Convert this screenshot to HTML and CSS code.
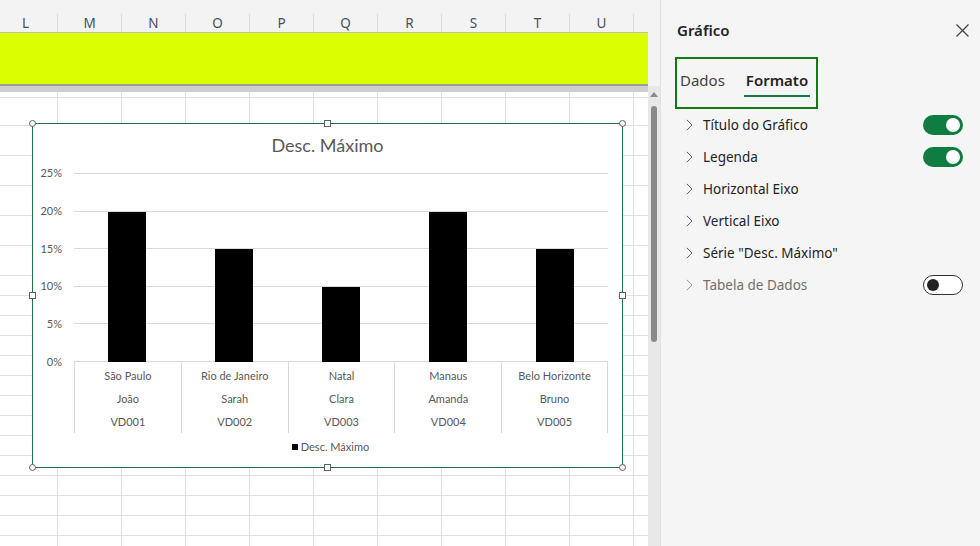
FILE: index.html
```html
<!DOCTYPE html>
<html lang="pt">
<head>
<meta charset="utf-8">
<title>Gráfico</title>
<link rel="stylesheet" href="styles.css">
</head>
<body>
<div class="app">
  <div class="sheet">
    <div class="sheet-main">
      <div class="col-head">
        <div class="col">L</div>
        <div class="col">M</div>
        <div class="col">N</div>
        <div class="col">O</div>
        <div class="col">P</div>
        <div class="col">Q</div>
        <div class="col">R</div>
        <div class="col">S</div>
        <div class="col">T</div>
        <div class="col">U</div>
        <div class="col"></div>
      </div>
      <div class="band"></div>
      <div class="freeze-dark"></div>
      <div class="freeze-light"></div>
      <div class="grid">
        <div class="row h5"></div>
        <div class="row h27"></div>
        <div class="row h29"></div>
        <div class="row h29"></div>
        <div class="row h29"></div>
        <div class="row h29"></div>
        <div class="row h29"></div>
        <div class="row h19"></div>
        <div class="row h19"></div>
        <div class="row h19"></div>
        <div class="row h19"></div>
        <div class="row h19"></div>
        <div class="row h19"></div>
        <div class="row h19"></div>
        <div class="row h19"></div>
        <div class="row h19"></div>
        <div class="row h19"></div>
        <div class="row h19"></div>
        <div class="row h19"></div>
        <div class="row h19"></div>
        <div class="row h19"></div>
      </div>

      <div class="chart">
        <span class="hd circ tl"></span>
        <span class="hd sq tm"></span>
        <span class="hd circ tr"></span>
        <span class="hd sq ml"></span>
        <span class="hd sq mr"></span>
        <span class="hd circ bl"></span>
        <span class="hd sq bm"></span>
        <span class="hd circ br"></span>

        <div class="chart-title">Desc. Máximo</div>
        <div class="chart-body">
          <div class="yaxis">
            <span>25%</span><span>20%</span><span>15%</span><span>10%</span><span>5%</span><span>0%</span>
          </div>
          <div class="plot">
            <div class="gridlines">
              <i></i><i></i><i></i><i></i><i></i><i></i>
            </div>
            <div class="bars">
              <div class="bar" style="height:150px"></div>
              <div class="bar" style="height:113px"></div>
              <div class="bar" style="height:75px"></div>
              <div class="bar" style="height:150px"></div>
              <div class="bar" style="height:113px"></div>
            </div>
          </div>
          <div class="cats">
            <div class="cat"><div>São Paulo</div><div>João</div><div>VD001</div></div>
            <div class="cat"><div>Rio de Janeiro</div><div>Sarah</div><div>VD002</div></div>
            <div class="cat"><div>Natal</div><div>Clara</div><div>VD003</div></div>
            <div class="cat"><div>Manaus</div><div>Amanda</div><div>VD004</div></div>
            <div class="cat last"><div>Belo Horizonte</div><div>Bruno</div><div>VD005</div></div>
          </div>
        </div>
        <div class="legend"><span class="mark"></span><span>Desc. Máximo</span></div>
      </div>
    </div>
    <div class="vscroll">
      <div class="vs-top"></div>
      <div class="vs-track">
        <div class="vs-arrow"></div>
        <div class="vs-thumb"></div>
      </div>
    </div>
  </div>

  <aside class="panel">
    <div class="panel-head">
      <div class="panel-title">Gráfico</div>
      <svg class="close" width="13" height="13" viewBox="0 0 13 13"><path d="M0.5 0.5 L12.5 12.5 M12.5 0.5 L0.5 12.5" stroke="#424242" stroke-width="1.2" fill="none"/></svg>
    </div>
    <div class="tabs">
      <div class="tab">Dados</div>
      <div class="tab active">Formato</div>
    </div>
    <div class="opts">
      <div class="opt">
        <svg class="chev" width="7" height="12" viewBox="0 0 7 12"><path d="M0.8 0.8 L6 6 L0.8 11.2" stroke="#616161" stroke-width="1" fill="none"/></svg>
        <span class="opt-label">Título do Gráfico</span>
        <span class="tg on"><span class="knob"></span></span>
      </div>
      <div class="opt">
        <svg class="chev" width="7" height="12" viewBox="0 0 7 12"><path d="M0.8 0.8 L6 6 L0.8 11.2" stroke="#616161" stroke-width="1" fill="none"/></svg>
        <span class="opt-label">Legenda</span>
        <span class="tg on"><span class="knob"></span></span>
      </div>
      <div class="opt">
        <svg class="chev" width="7" height="12" viewBox="0 0 7 12"><path d="M0.8 0.8 L6 6 L0.8 11.2" stroke="#616161" stroke-width="1" fill="none"/></svg>
        <span class="opt-label">Horizontal Eixo</span>
      </div>
      <div class="opt">
        <svg class="chev" width="7" height="12" viewBox="0 0 7 12"><path d="M0.8 0.8 L6 6 L0.8 11.2" stroke="#616161" stroke-width="1" fill="none"/></svg>
        <span class="opt-label">Vertical Eixo</span>
      </div>
      <div class="opt">
        <svg class="chev" width="7" height="12" viewBox="0 0 7 12"><path d="M0.8 0.8 L6 6 L0.8 11.2" stroke="#616161" stroke-width="1" fill="none"/></svg>
        <span class="opt-label">Série "Desc. Máximo"</span>
      </div>
      <div class="opt disabled">
        <svg class="chev" width="7" height="12" viewBox="0 0 7 12"><path d="M0.8 0.8 L6 6 L0.8 11.2" stroke="#9a9a9a" stroke-width="1" fill="none"/></svg>
        <span class="opt-label">Tabela de Dados</span>
        <span class="tg off"><span class="knob"></span></span>
      </div>
    </div>
  </aside>
</div>
</body>
</html>
```

FILE: styles.css
```css
* { box-sizing: border-box; }
html, body { margin: 0; padding: 0; }
body {
  width: 980px;
  height: 546px;
  overflow: hidden;
  font-family: "Noto Sans", "Open Sans", sans-serif;
  background: #fff;
}
.app { display: flex; width: 980px; height: 546px; }

/* ---------- sheet ---------- */
.sheet { display: flex; width: 660px; height: 546px; }
.sheet-main {
  position: relative;
  width: 648px;
  height: 546px;
  display: flex;
  flex-direction: column;
  overflow: hidden;
}
.col-head {
  flex: 0 0 33px;
  display: flex;
  background: #f3f3f3;
  border-bottom: 1px solid #bdbdbd;
}
.col {
  flex: 0 0 64px;
  height: 18px;
  margin-top: 14px;
  border-right: 1px solid #d8d8d8;
  text-align: center;
  font-size: 13.5px;
  line-height: 18px;
  color: #45505a;
}
.col:first-child { margin-left: -6px; }
.band { flex: 0 0 51px; background: #d9ff00; }
.freeze-dark { flex: 0 0 2px; background: #9c9c9c; }
.freeze-light { flex: 0 0 6px; background: #cfcfcf; }
.grid {
  flex: 1;
  background-image: linear-gradient(to right, transparent 63px, #e1e1e1 63px, #e1e1e1 64px);
  background-size: 64px 100%;
  background-position: -6px 0;
}
.row { border-bottom: 1px solid #e1e1e1; }
.h5 { height: 6px; }
.h27 { height: 28px; }
.h29 { height: 30px; }
.h19 { height: 20px; }

.vscroll { width: 12px; display: flex; flex-direction: column; }
.vs-top { flex: 0 0 86px; background: #f3f3f3; }
.vs-track { flex: 1; background: #e8e8e8; display: flex; flex-direction: column; align-items: center; }
.vs-arrow {
  width: 0; height: 0;
  margin-top: 6px;
  border-left: 4px solid transparent;
  border-right: 4px solid transparent;
  border-bottom: 5px solid #8a8a8a;
}
.vs-thumb {
  margin-top: 9px;
  width: 6px;
  height: 236px;
  border-radius: 3px;
  background: #8a8a8a;
}

/* ---------- chart ---------- */
.chart {
  position: absolute;
  left: 32px;
  top: 123px;
  width: 591px;
  height: 345px;
  border: 1px solid #217346;
  background: #fff;
  font-family: "Lato", "Carlito", sans-serif;
  color: #595959;
}
.hd {
  position: absolute;
  width: 7px;
  height: 7px;
  border: 1px solid #5f5f5f;
  background: #fff;
}
.circ { border-radius: 50%; }
.tl { left: -4px; top: -4px; }
.tr { right: -4px; top: -4px; }
.bl { left: -4px; bottom: -4px; }
.br { right: -4px; bottom: -4px; }
.tm { left: calc(50% - 4px); top: -4px; }
.bm { left: calc(50% - 4px); bottom: -4px; }
.ml { left: -4px; top: calc(50% - 4px); }
.mr { right: -4px; top: calc(50% - 4px); }

.chart-title {
  padding-top: 9px;
  text-align: center;
  font-size: 18px;
  line-height: 24px;
}
.chart-body {
  margin-top: 16px;
  display: grid;
  grid-template-columns: 29px 534px;
  column-gap: 12px;
}
.yaxis {
  grid-column: 1;
  grid-row: 1;
  height: 201px;
  margin: -6px 0;
  display: flex;
  flex-direction: column;
  justify-content: space-between;
  text-align: right;
  font-size: 11px;
  line-height: 12px;
}
.plot {
  grid-column: 2;
  grid-row: 1;
  display: grid;
  height: 189px;
}
.gridlines, .bars { grid-area: 1 / 1; }
.gridlines {
  display: flex;
  flex-direction: column;
  justify-content: space-between;
  height: 189px;
}
.gridlines i { display: block; height: 1px; background: #d9d9d9; }
.bars {
  height: 189px;
  display: flex;
  align-items: flex-end;
  justify-content: space-around;
}
.bar { width: 38px; background: #000; }
.cats {
  grid-column: 2;
  grid-row: 2;
  height: 69px;
  display: grid;
  grid-template-columns: repeat(5, 1fr);
}
.cat {
  border-left: 1px solid #d9d9d9;
  padding-top: 2px;
  text-align: center;
  font-size: 11px;
  line-height: 23px;
  white-space: nowrap;
}
.cat.last { border-right: 1px solid #d9d9d9; }
.legend {
  margin-top: 9px;
  padding-left: 6px;
  display: flex;
  justify-content: center;
  align-items: center;
  gap: 3px;
  font-size: 11px;
  line-height: 14px;
}
.mark { width: 6px; height: 6px; background: #000; }

/* ---------- panel ---------- */
.panel {
  width: 320px;
  height: 546px;
  background: #f5f5f5;
  border-left: 1px solid #e0e0e0;
  padding: 0 11px 0 14px;
  color: #242424;
}
.panel-head {
  height: 57px;
  padding-top: 3px;
  display: flex;
  align-items: center;
  justify-content: space-between;
}
.panel-title {
  margin-left: 2px;
  font-size: 15px;
  font-weight: 600;
}
.close { display: block; }
.tabs {
  width: 143px;
  height: 52px;
  border: 2px solid #107c10;
  padding-left: 1px;
  display: flex;
  align-items: flex-start;
  gap: 17px;
}
.tab {
  padding: 10px 2px 4px;
  font-size: 15px;
  line-height: 22px;
  color: #424242;
  border-bottom: 2px solid transparent;
}
.tab.active {
  color: #242424;
  font-weight: 600;
  border-bottom-color: #107c41;
}
.opt {
  height: 32px;
  display: flex;
  align-items: center;
  padding: 0 6px 0 11px;
  font-size: 13.5px;
}
.chev { display: block; flex: 0 0 7px; }
.opt-label { margin-left: 10px; }
.opt.disabled .opt-label { color: #707070; }
.tg {
  margin-left: auto;
  width: 40px;
  height: 20px;
  border-radius: 10px;
  display: flex;
  align-items: center;
  padding: 0 3px;
}
.tg.on { background: #107c41; justify-content: flex-end; }
.tg.on .knob { width: 14px; height: 14px; border-radius: 50%; background: #fff; }
.tg.off { background: #fff; border: 1px solid #333; }
.tg.off .knob { width: 12px; height: 12px; border-radius: 50%; background: #222; }
```
